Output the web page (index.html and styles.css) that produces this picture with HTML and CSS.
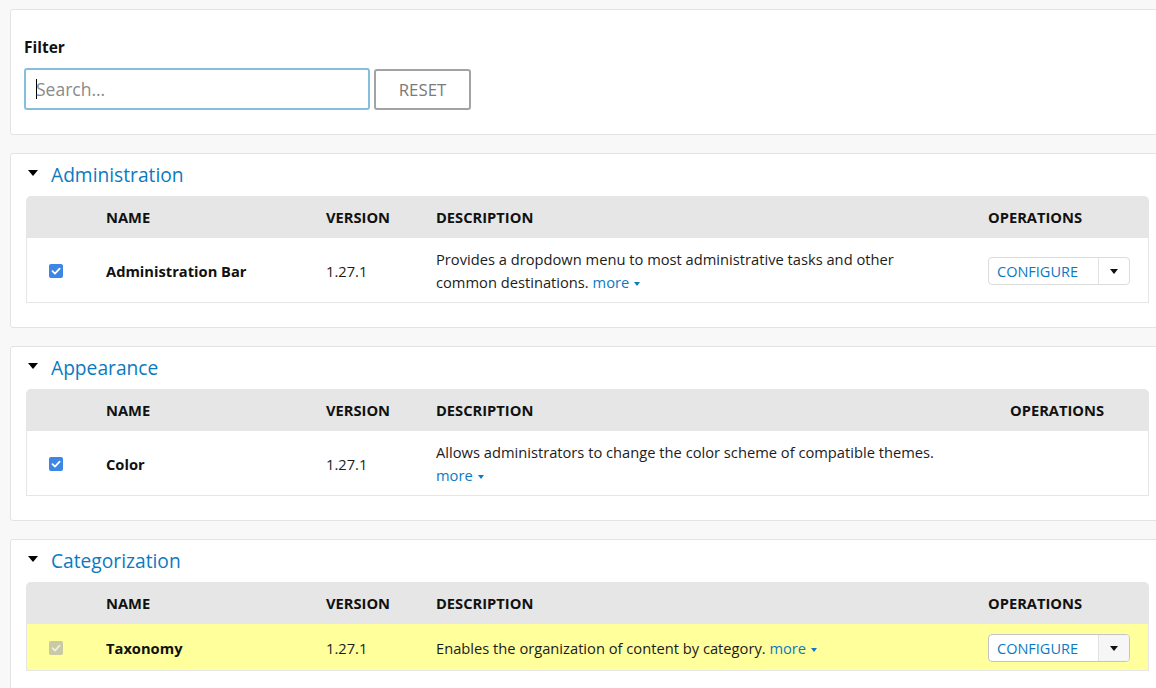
FILE: index.html
```html
<!DOCTYPE html>
<html lang="en">
<head>
<meta charset="utf-8">
<title>Modules</title>
<link rel="stylesheet" href="styles.css">
</head>
<body>
<div class="page">
  <div class="panel filter">
    <div class="filter-label">Filter</div>
    <div class="filter-row">
      <div class="search"><span class="caret-line"></span><span class="placeholder">Search...</span></div>
      <button class="reset">RESET</button>
    </div>
  </div>

  <div class="panel section">
    <div class="legend"><span class="tri"></span><span class="legend-text">Administration</span></div>
    <table class="mods">
      <colgroup><col class="c-check"><col class="c-name"><col class="c-ver"><col class="c-desc"><col class="c-ops"></colgroup>
      <thead><tr><th></th><th>Name</th><th>Version</th><th>Description</th><th>Operations</th></tr></thead>
      <tbody><tr>
        <td><span class="cb"><svg viewBox="0 0 14 14" width="14" height="14"><path d="M3.5 7.2 L6 9.6 L10.6 4.6" fill="none" stroke="#fff" stroke-width="1.8" stroke-linecap="round" stroke-linejoin="round"/></svg></span></td>
        <td class="name">Administration Bar</td>
        <td>1.27.1</td>
        <td><div class="desc">Provides a dropdown menu to most administrative tasks and other common destinations. <a class="more">more<span class="mcaret"></span></a></div></td>
        <td><div class="dbtn"><span class="dbtn-main">CONFIGURE</span><span class="dbtn-tog"><span class="dcaret"></span></span></div></td>
      </tr></tbody>
    </table>
  </div>

  <div class="panel section">
    <div class="legend"><span class="tri"></span><span class="legend-text">Appearance</span></div>
    <table class="mods narrow-ops">
      <colgroup><col class="c-check"><col class="c-name"><col class="c-ver"><col class="c-desc"><col class="c-ops"></colgroup>
      <thead><tr><th></th><th>Name</th><th>Version</th><th>Description</th><th>Operations</th></tr></thead>
      <tbody><tr>
        <td><span class="cb"><svg viewBox="0 0 14 14" width="14" height="14"><path d="M3.5 7.2 L6 9.6 L10.6 4.6" fill="none" stroke="#fff" stroke-width="1.8" stroke-linecap="round" stroke-linejoin="round"/></svg></span></td>
        <td class="name">Color</td>
        <td>1.27.1</td>
        <td><div class="desc">Allows administrators to change the color scheme of compatible themes. <a class="more">more<span class="mcaret"></span></a></div></td>
        <td></td>
      </tr></tbody>
    </table>
  </div>

  <div class="panel section">
    <div class="legend"><span class="tri"></span><span class="legend-text">Categorization</span></div>
    <table class="mods">
      <colgroup><col class="c-check"><col class="c-name"><col class="c-ver"><col class="c-desc"><col class="c-ops"></colgroup>
      <thead><tr><th></th><th>Name</th><th>Version</th><th>Description</th><th>Operations</th></tr></thead>
      <tbody><tr class="hl">
        <td><span class="cb cb-dis"><svg viewBox="0 0 14 14" width="14" height="14"><path d="M3.5 7.2 L6 9.6 L10.6 4.6" fill="none" stroke="#eeeedd" stroke-width="1.8" stroke-linecap="round" stroke-linejoin="round"/></svg></span></td>
        <td class="name">Taxonomy</td>
        <td>1.27.1</td>
        <td><div class="desc">Enables the organization of content by category. <a class="more">more<span class="mcaret"></span></a></div></td>
        <td><div class="dbtn dbtn-hl"><span class="dbtn-main">CONFIGURE</span><span class="dbtn-tog"><span class="dcaret"></span></span></div></td>
      </tr></tbody>
    </table>
  </div>
</div>
</body>
</html>
```

FILE: styles.css
```css
html, body {
  margin: 0;
  overflow: hidden;
}
body {
  background: #f8f8f8;
  font-family: "Open Sans", "Liberation Sans", sans-serif;
  font-size: 14.7px;
  color: #1c1c1c;
}
.page {
  padding: 9px 0 0 10px;
  width: 1156px;
  display: flex;
  flex-direction: column;
  gap: 18px;
}
.panel {
  background: #fff;
  border: 1px solid #e3e3e3;
  border-radius: 3px;
}
.filter {
  padding: 27px 15px 24px 13px;
}
.filter-label {
  font-weight: 700;
  font-size: 15.5px;
  line-height: 20px;
  margin-bottom: 11px;
  color: #111;
}
.filter-row {
  display: flex;
  gap: 4px;
  align-items: flex-start;
}
.search {
  box-sizing: border-box;
  width: 346px;
  height: 42px;
  border: 2px solid #86bfdb;
  border-radius: 3px;
  display: flex;
  align-items: center;
  padding-left: 10px;
}
.caret-line {
  width: 1px;
  height: 20px;
  background: #000;
}
.placeholder {
  color: #8a8a8a;
  font-size: 17.5px;
  margin-left: -1px;
}
.reset {
  box-sizing: border-box;
  margin-top: 1px;
  width: 97px;
  height: 41px;
  border: 2px solid #a3a3a3;
  border-radius: 3px;
  background: #fff;
  color: #7a7a7a;
  font-family: inherit;
  font-size: 16.8px;
  padding: 0;
}
.section {
  padding: 5px 15px 24px 15px;
}
.legend {
  display: flex;
  align-items: center;
  height: 30px;
  margin-bottom: 7px;
}
.tri {
  width: 0;
  height: 0;
  border-left: 5px solid transparent;
  border-right: 5px solid transparent;
  border-top: 6px solid #000;
  margin-left: 2px;
  margin-right: 13px;
  margin-top: -3px;
}
.legend-text {
  font-size: 19.2px;
  color: #0a7ac2;
}
.mods {
  width: 1123px;
  table-layout: fixed;
  border-collapse: separate;
  border-spacing: 0;
}
.c-check { width: 68px; }
.c-name { width: 220px; }
.c-ver { width: 110px; }
.c-desc { width: 552px; }
.c-ops { width: 173px; }
.narrow-ops .c-desc { width: 574px; }
.narrow-ops .c-ops { width: 151px; }
.mods th {
  background: #e6e6e6;
  height: 42px;
  padding: 0 12px;
  text-align: left;
  text-transform: uppercase;
  font-weight: 700;
  font-size: 14.7px;
  color: #111;
}
.mods th:first-child { border-top-left-radius: 5px; }
.mods th:last-child { border-top-right-radius: 5px; }
.mods td {
  padding: 10px 12px 8px;
  line-height: 23px;
  vertical-align: middle;
  border-bottom: 1px solid #e6e6e6;
  background: #fff;
}
.mods td:first-child { border-left: 1px solid #e6e6e6; }
.mods td:last-child { border-right: 1px solid #e6e6e6; }
.mods tr.hl td { background: #ffff9c; }
.name { font-weight: 700; color: #111; }
.desc { max-width: 510px; }
.cb {
  display: block;
  width: 14px;
  height: 14px;
  margin-left: 10px;
  border-radius: 2px;
  background: #3d86e6;
}
.cb svg { display: block; }
.cb-dis { background: #c9c9a6; }
.more {
  color: #0a7ac2;
  text-decoration: none;
}
.mcaret {
  display: inline-block;
  width: 0;
  height: 0;
  border-left: 3.5px solid transparent;
  border-right: 3.5px solid transparent;
  border-top: 4px solid #0a7ac2;
  margin-left: 5px;
  vertical-align: middle;
}
.dbtn {
  box-sizing: border-box;
  display: flex;
  width: 142px;
  height: 28px;
  border: 1px solid #dcdcdc;
  border-radius: 4px;
  background: #fff;
  overflow: hidden;
}
.dbtn-hl { border-color: #c4c4c4; }
.dbtn-main {
  flex: 1;
  display: flex;
  align-items: center;
  padding-left: 8px;
  color: #0a7ac2;
  font-size: 14.5px;
}
.dbtn-tog {
  width: 30px;
  border-left: 1px solid #e2e2e2;
  display: flex;
  align-items: center;
  justify-content: center;
}
.dbtn-hl .dbtn-tog { background: #f6f6f6; }
.dcaret {
  width: 0;
  height: 0;
  border-left: 4px solid transparent;
  border-right: 4px solid transparent;
  border-top: 5px solid #111;
}
```
